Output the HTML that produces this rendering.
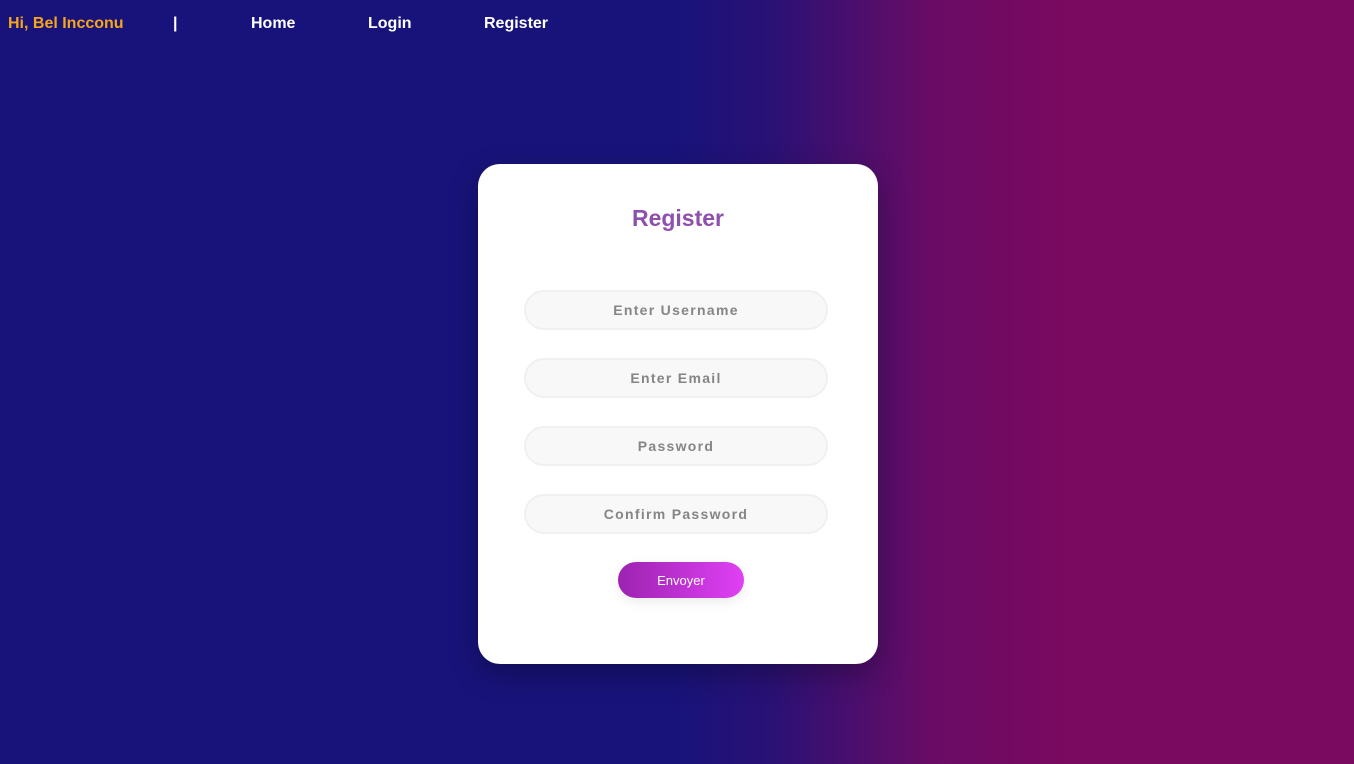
<!DOCTYPE html>
<html><head><meta charset="utf-8"><style>
*{margin:0;padding:0;box-sizing:border-box}
html,body{width:1354px;height:764px;overflow:hidden}
body{font-family:"Liberation Sans",Arial,sans-serif;background:linear-gradient(to right,#18137a 0%,#18137a 50%,#2a1175 57%,#6a0c65 69%,#7a0960 79%,#7a0960 100%);position:relative}
nav{position:absolute;top:15px;left:0;height:20px;font-weight:bold;font-size:16px;color:#fff}
nav span{position:absolute;white-space:nowrap;top:0}
.card{position:absolute;left:478px;top:164px;width:400px;height:500px;background:#fff;border-radius:22px;box-shadow:0 10px 30px rgba(0,0,0,.3)}
h1{position:absolute;top:41px;width:100%;text-align:center;font-size:23px;color:#8e4fae;font-weight:bold}
.in{position:absolute;left:46px;width:304px;height:40px;border:2px solid #f0f0f0;background:#f8f8f8;border-radius:20px;text-align:center;line-height:37px;font-size:14px;font-weight:bold;color:#858585;letter-spacing:1.3px}
.btn{position:absolute;left:140px;top:398px;width:126px;height:36px;border-radius:18px;background:linear-gradient(to right,#9c23b0,#e040f5);color:#fff;font-size:13px;text-align:center;line-height:37px;box-shadow:0 4px 12px rgba(0,0,0,.08)}
</style></head><body>
<nav><span style="left:8px;color:#f7a51c">Hi, Bel Incconu</span><span style="left:173px">|</span><span style="left:251px">Home</span><span style="left:368px">Login</span><span style="left:484px">Register</span></nav>
<div class="card">
<h1>Register</h1>
<div class="in" style="top:126px">Enter Username</div>
<div class="in" style="top:194px">Enter Email</div>
<div class="in" style="top:262px">Password</div>
<div class="in" style="top:330px">Confirm Password</div>
<div class="btn">Envoyer</div>
</div>
</body></html>
